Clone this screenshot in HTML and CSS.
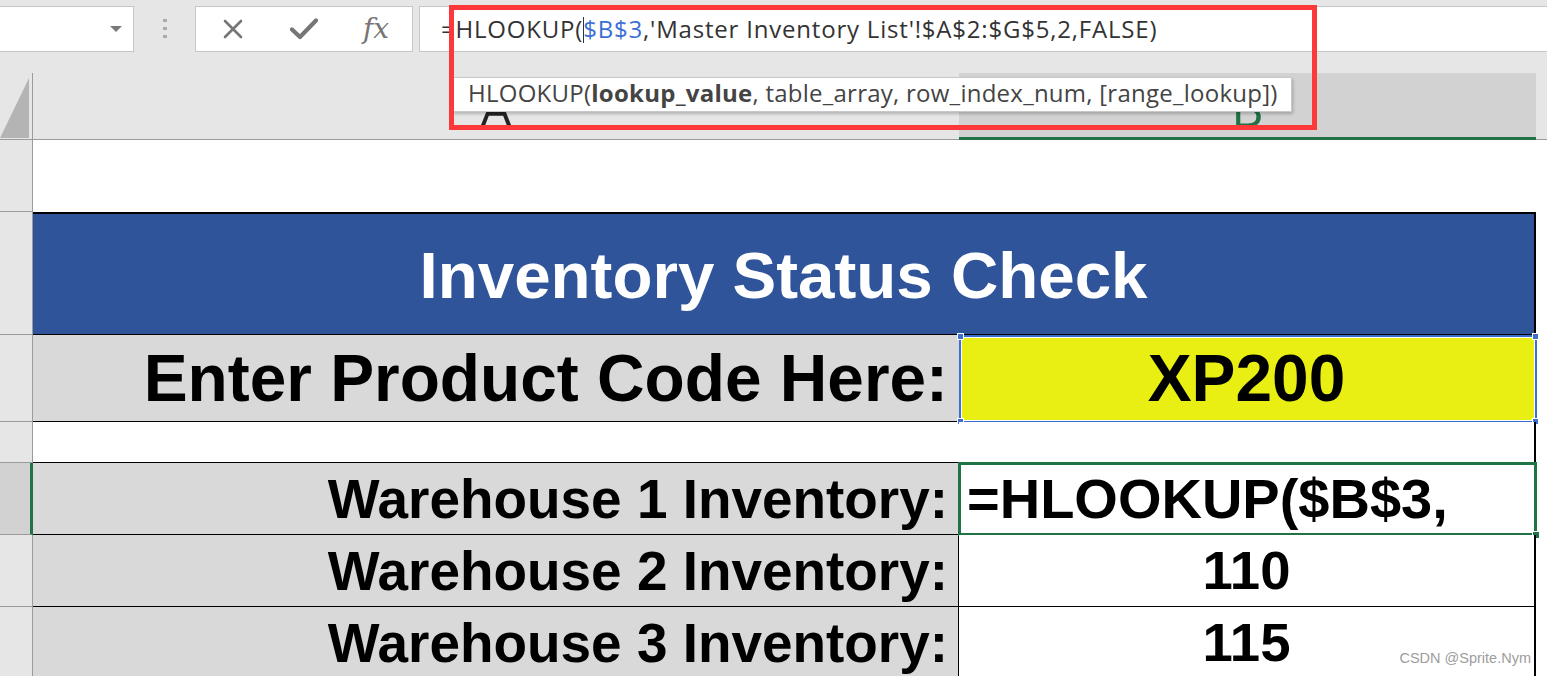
FILE: index.html
```html
<!DOCTYPE html>
<html lang="en">
<head>
    <meta charset="UTF-8">
    <meta name="viewport" content="width=device-width, initial-scale=1.0">
    <title>Inventory Status Check</title>

    <link rel="stylesheet" href="styles.css">

</head>
<body>
    <div id="app">
        <section id="formula_bar">
            <div id="name_box"><span class="drop_arrow"></span></div>
            <div id="grip"><i></i><i></i><i></i></div>
            <div id="fx_buttons">
                <span class="fx_btn">
                    <svg width="20" height="20" viewBox="0 0 20 20"><path d="M2 2 L18 18 M18 2 L2 18" stroke="#767676" stroke-width="2.6" stroke-linecap="round" fill="none"/></svg>
                </span>
                <span class="fx_btn">
                    <svg width="28" height="22" viewBox="0 0 28 22"><path d="M2 11.5 L10 19 L26 2.5" stroke="#767676" stroke-width="4.2" stroke-linecap="round" stroke-linejoin="round" fill="none"/></svg>
                </span>
                <span class="fx_btn fx_text">fx</span>
            </div>
            <div id="formula_input">=HLOOKUP(<span class="cursor"></span><span class="ref">$B$3</span>,'Master Inventory List'!$A$2:$G$5,2,FALSE)</div>
        </section>

        <section id="col_headers">
            <div class="corner">
                <svg width="29" height="60" viewBox="0 0 29 60"><polygon points="0,60 29,0 29,60" fill="#b4b4b4"/></svg>
            </div>
            <div class="ch ch_a">A</div>
            <div class="ch ch_b">B</div>
            <div class="ch ch_c"></div>
        </section>

        <section id="sheet">
            <div class="row r1">
                <div class="rh"></div>
                <div class="blank"></div>
            </div>
            <div class="row r2">
                <div class="rh"></div>
                <div class="title_cell">Inventory Status Check</div>
                <div class="cc"></div>
            </div>
            <div class="row r3">
                <div class="rh"></div>
                <div class="ca label big">Enter Product Code Here:</div>
                <div class="cb code big">
                    XP200
                    <div class="ref_box">
                        <i class="h tl"></i><i class="h tr"></i><i class="h bl"></i><i class="h br"></i>
                    </div>
                </div>
                <div class="cc"></div>
            </div>
            <div class="row r4">
                <div class="rh"></div>
                <div class="ca empty"></div>
                <div class="cb"></div>
                <div class="cc"></div>
            </div>
            <div class="row r5">
                <div class="rh active"></div>
                <div class="ca label sep">Warehouse 1 Inventory:</div>
                <div class="cb editing">
                    =HLOOKUP($B$3,
                    <div class="active_box"><i class="fill_handle"></i></div>
                </div>
                <div class="cc"></div>
            </div>
            <div class="row r6">
                <div class="rh"></div>
                <div class="ca label sep">Warehouse 2 Inventory:</div>
                <div class="cb num">110</div>
                <div class="cc"></div>
            </div>
            <div class="row r7">
                <div class="rh"></div>
                <div class="ca label sep">Warehouse 3 Inventory:</div>
                <div class="cb num">115</div>
                <div class="cc"></div>
            </div>
        </section>

        <div id="fn_tooltip">HLOOKUP(<b>lookup_value</b>, table_array, row_index_num, [range_lookup])</div>
        <div id="red_mark"></div>
        <div id="watermark">CSDN @Sprite.Nym</div>
    </div>
</body>
</html>
```

FILE: styles.css
```css
* {
    margin: 0;
    padding: 0;
    box-sizing: border-box;
}

html, body {
    width: 100%;
    height: 100%;
    background-color: #e6e6e6;
    overflow: hidden;
}

#app {
    position: relative;
    width: 1547px;
    height: 676px;
    overflow: hidden;
    background-color: #e6e6e6;
    font-family: "Open Sans", "Noto Sans", sans-serif;
}

/* 수식 입력줄 */
#formula_bar {
    height: 73px;
    display: flex;
    align-items: flex-start;
    padding-top: 6px;
}

#name_box {
    width: 135px;
    height: 46px;
    margin-left: -1px;
    background-color: #fff;
    border: 1px solid #c6c6c6;
    display: flex;
    align-items: center;
    justify-content: flex-end;
    padding-right: 11px;
}

.drop_arrow {
    width: 0;
    height: 0;
    border-left: 6px solid transparent;
    border-right: 6px solid transparent;
    border-top: 6px solid #7a7a7a;
}

#grip {
    margin-left: 29px;
    padding-top: 13px;
    display: flex;
    flex-direction: column;
    gap: 5px;
}

#grip i {
    display: block;
    width: 4px;
    height: 3px;
    background-color: #ababab;
}

#fx_buttons {
    margin-left: 28px;
    width: 218px;
    height: 46px;
    background-color: #fff;
    border: 1px solid #c6c6c6;
    display: flex;
    align-items: center;
    padding-left: 1px;
}

.fx_btn {
    width: 71px;
    height: 44px;
    display: flex;
    align-items: center;
    justify-content: center;
}

.fx_text {
    font-family: "DejaVu Serif", "Liberation Serif", serif;
    font-style: italic;
    font-size: 28px;
    color: #767676;
    padding-bottom: 2px;
    padding-left: 3px;
}

#formula_input {
    flex: 1;
    margin-left: 6px;
    margin-right: -2px;
    height: 46px;
    background-color: #fff;
    border: 1px solid #c6c6c6;
    padding-left: 21px;
    font-size: 24px;
    letter-spacing: 0.8px;
    line-height: 44px;
    color: #333;
    white-space: nowrap;
}

#formula_input .ref {
    color: #3c6fd4;
}

#formula_input .cursor {
    display: inline-block;
    width: 1px;
    height: 26px;
    background-color: #333;
    vertical-align: -5px;
    margin-right: -1px;
}

/* 열 머리글 */
#col_headers {
    height: 67px;
    display: flex;
}

.corner {
    width: 33px;
    border-right: 1px solid #9b9b9b;
    border-bottom: 1px solid #9b9b9b;
    display: flex;
    align-items: flex-end;
    justify-content: flex-end;
    padding-right: 3px;
    padding-bottom: 1px;
}

.corner svg {
    display: block;
}

.ch {
    display: flex;
    align-items: flex-end;
    justify-content: center;
    border-bottom: 1px solid #9b9b9b;
    font-size: 50px;
    line-height: 50px;
    color: #222;
    padding-bottom: 6px;
}

.ch_a {
    width: 926px;
}

.ch_b {
    width: 577px;
    background-color: #d2d2d2;
    border-bottom: 3px solid #217346;
    color: #217346;
    padding-bottom: 4px;
}

.ch_c {
    flex: 1;
}

/* 시트 */
.row {
    display: flex;
}

.r1 { height: 72px; }
.r2 { height: 123px; }
.r3 { height: 87px; }
.r4 { height: 41px; }
.r5, .r6, .r7 { height: 72px; }

.rh {
    width: 33px;
    border-right: 1px solid #9b9b9b;
    border-bottom: 1px solid #9b9b9b;
    background-color: #e6e6e6;
}

.rh.active {
    background-color: #d2d2d2;
    border-right: 3px solid #217346;
}

.blank, .cc {
    flex: 1;
    background-color: #fff;
}

.title_cell {
    width: 1503px;
    background-color: #30549a;
    border-top: 2px solid #000;
    border-bottom: 1px solid #000;
    border-right: 2px solid #000;
    display: flex;
    align-items: center;
    justify-content: center;
    color: #fff;
    font-family: "Liberation Sans", Arial, sans-serif;
    font-weight: bold;
    font-size: 65.5px;
    padding-top: 2px;
}

.ca {
    width: 926px;
    background-color: #fff;
    border-bottom: 1px solid #000;
}

.cb {
    position: relative;
    width: 577px;
    background-color: #fff;
    border-right: 2px solid #000;
    border-bottom: 1px solid #000;
    display: flex;
    align-items: center;
    justify-content: center;
    color: #000;
    font-family: "Liberation Sans", Arial, sans-serif;
    font-weight: bold;
    font-size: 54.5px;
    white-space: nowrap;
}

.label {
    background-color: #d9d9d9;
    display: flex;
    align-items: center;
    justify-content: flex-end;
    padding-right: 11px;
    color: #000;
    font-family: "Liberation Sans", Arial, sans-serif;
    font-weight: bold;
    font-size: 54.9px;
    white-space: nowrap;
}

.label.sep {
    border-right: 1px solid #000;
    padding-right: 10px;
}

.big {
    font-size: 65.8px;
}

.code {
    background-color: #e9ef12;
}

.editing {
    justify-content: flex-start;
    padding-left: 8px;
    font-size: 56px;
}

/* 참조 셀 강조 (파란 테두리) */
.ref_box {
    position: absolute;
    left: 0;
    top: 0;
    right: -3px;
    bottom: -2px;
    border: 2px solid #3a6fd0;
    box-shadow: inset 0 0 0 1px #fff;
}

.ref_box .h {
    position: absolute;
    width: 7px;
    height: 7px;
    background-color: #3a6fd0;
    border: 1px solid #fff;
}

.h.tl { left: -4px; top: -4px; }
.h.tr { right: -4px; top: -4px; }
.h.bl { left: -4px; bottom: -4px; }
.h.br { right: -4px; bottom: -4px; }

/* 활성 셀 (초록 테두리) */
.active_box {
    position: absolute;
    left: -1px;
    top: -1px;
    right: -3px;
    bottom: -2px;
    border: 3px solid #217346;
}

.fill_handle {
    position: absolute;
    right: -6px;
    bottom: -6px;
    width: 8px;
    height: 8px;
    background-color: #217346;
    border: 1px solid #fff;
}

/* 함수 도움말 */
#fn_tooltip {
    position: absolute;
    left: 452px;
    top: 77px;
    width: 840px;
    height: 35px;
    background-color: #fff;
    border: 1px solid #c8c8c8;
    box-shadow: 1px 2px 3px rgba(0, 0, 0, 0.22);
    padding-left: 15px;
    font-size: 24px;
    letter-spacing: 0.25px;
    line-height: 29px;
    color: #444;
    white-space: nowrap;
}

#fn_tooltip b {
    color: #444;
}

#red_mark {
    position: absolute;
    left: 449px;
    top: 5px;
    width: 868px;
    height: 125px;
    border: 5px solid #fc383b;
}

#watermark {
    position: absolute;
    top: 651px;
    right: 16px;
    font-family: "Liberation Sans", Arial, sans-serif;
    font-size: 14.5px;
    line-height: 14.5px;
    color: #9d9d9d;
    text-shadow: 0 0 2px #fff;
}
```
